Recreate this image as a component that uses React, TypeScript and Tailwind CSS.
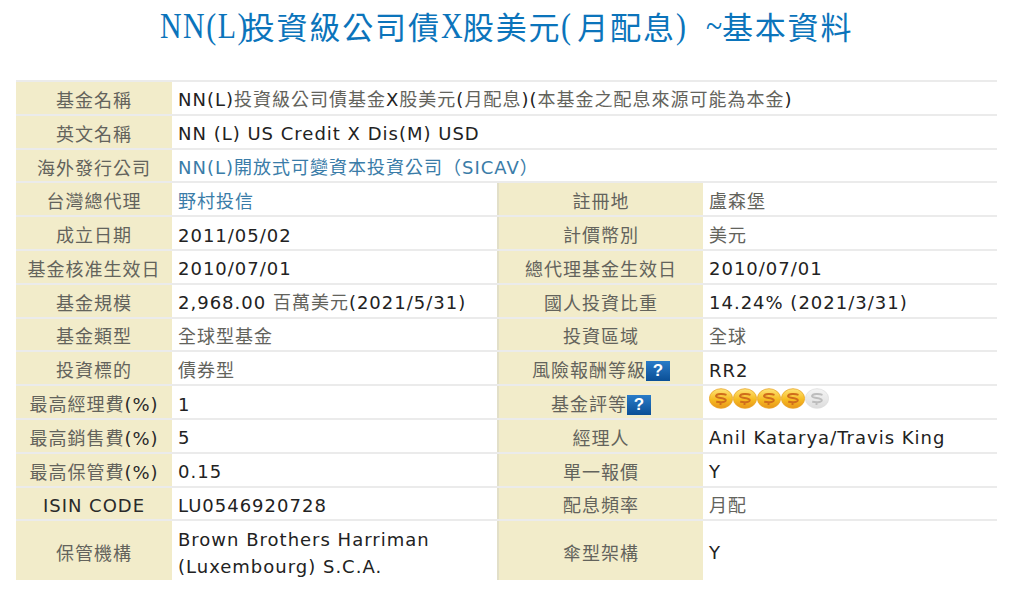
import React from "react";

const cjk = "[font-family:'DejaVu_Sans','Noto_Sans_CJK_TC',sans-serif]";

// Chinese runs read lighter than the latin text in the reference
const T = ({ text }: { text: string }) => (
  <span>
    {text.split(/([\u3400-\u9fff（）]+)/).map((part, i) =>
      i % 2 ? (
        <span key={i} className="text-[#63635c]">
          {part}
        </span>
      ) : (
        part
      ),
    )}
  </span>
);

const Narrow = ({ text, className }: { text: string; className: string }) => (
  <span className={`inline-block whitespace-pre ${className}`}>
    <span className="inline-block origin-left scale-x-[0.83] font-['Liberation_Serif',serif] text-[36px]">{text}</span>
  </span>
);

const Coin = ({ on }: { on: boolean }) => {
  const id = on ? "coinGold" : "coinGrey";
  return (
    <svg width="24" height="21" viewBox="0 0 24 21" className="shrink-0">
      <defs>
        <linearGradient id={id} x1="0" y1="0" x2="0" y2="1">
          <stop offset="0" stopColor={on ? "#ffe477" : "#f4f4f4"} />
          <stop offset="0.55" stopColor={on ? "#f6bc22" : "#e8e8e8"} />
          <stop offset="1" stopColor={on ? "#e8951a" : "#dcdcdc"} />
        </linearGradient>
      </defs>
      <ellipse cx="12" cy="10.5" rx="11.6" ry="9.8" fill={`url(#${id})`} stroke={on ? "#e8a528" : "#dedede"} strokeWidth="0.8" />
      <path
        d="M17.5 6.8C14 5.6 7.5 5.6 7 8c-.2 2.4 9.5 1.6 9.8 4.2.2 1.8-3.8 2.6-9.6 1.6M11.5 14v3"
        fill="none"
        stroke={on ? "#cf6d1c" : "#bdbdbd"}
        strokeWidth="1.9"
      />
    </svg>
  );
};

const Help = () => (
  <span className="inline-flex h-5 w-6 shrink-0 items-center justify-center bg-gradient-to-b from-[#2a7cc8] to-[#0a4f96] font-['Liberation_Sans',sans-serif] text-[17px] leading-none font-bold tracking-normal text-white">
    ?
  </span>
);

const Label = ({ children, className = "" }: { children: React.ReactNode; className?: string }) => (
  <div className={`flex items-center justify-center bg-[#f2ecca] pt-[5px] whitespace-nowrap text-[#2a2a2a] ${className}`}>{children}</div>
);

const Value = ({ children, className = "", link }: { children: React.ReactNode; className?: string; link?: boolean }) => (
  <div className={`flex items-center bg-white pt-[4px] pl-[5px] whitespace-nowrap ${link ? "text-[#3a7ca8]" : "text-[#222]"} ${className}`}>{children}</div>
);

const WideRow = ({ label, children, link }: { label: string; children: React.ReactNode; link?: boolean }) => (
  <div className="flex h-[33.8px] border-b-2 border-[#ebebeb]">
    <Label className="w-[156px]">
      <T text={label} />
    </Label>
    <Value className="ml-px flex-1" link={link}>
      {children}
    </Value>
  </div>
);

const Row = ({
  l1,
  v1,
  l2,
  v2,
  link,
  last,
}: {
  l1: string;
  v1: React.ReactNode;
  l2: React.ReactNode;
  v2: React.ReactNode;
  link?: boolean;
  last?: boolean;
}) => (
  <div className={last ? "flex h-[59px]" : "flex h-[33.8px] border-b-2 border-[#ebebeb]"}>
    <Label className="w-[156px]">
      <T text={l1} />
    </Label>
    <Value className="ml-px w-[324px]" link={link}>
      {typeof v1 === "string" && !link ? <T text={v1} /> : v1}
    </Value>
    <Label className="w-[206px] border-l-2 border-[#e2dfc8]">{typeof l2 === "string" ? <T text={l2} /> : l2}</Label>
    <Value className="ml-px flex-1">{typeof v2 === "string" ? <T text={v2} /> : v2}</Value>
  </div>
);

export default function App() {
  return (
    <div className={`h-[597px] w-[1023px] overflow-hidden bg-white pr-[26px] pl-4 text-[18px] tracking-[1px] ${cjk}`}>
      <h1 className="flex h-[51px] items-center justify-center font-['Noto_Sans_CJK_TC',sans-serif] text-[31px] leading-none tracking-[1.85px] whitespace-nowrap text-[#0b74bb]">
        <Narrow text="NN(L)" className="w-[84px]" />
        投資級公司債
        <Narrow text="X" className="w-[22px]" />
        股美元
        <Narrow text="(" className="w-[16px]" />
        月配息
        <Narrow text=")" className="w-[30px]" />
        <Narrow text="~" className="w-[16px]" />
        基本資料
      </h1>
      <div className="mt-[29px] border-t-2 border-[#ebebeb]">
        <WideRow label="基金名稱">
          <T text="NN(L)投資級公司債基金X股美元(月配息)(本基金之配息來源可能為本金)" />
        </WideRow>
        <WideRow label="英文名稱">NN (L) US Credit X Dis(M) USD</WideRow>
        <WideRow label="海外發行公司" link>
          NN(L)開放式可變資本投資公司（SICAV）
        </WideRow>
        <Row l1="台灣總代理" v1="野村投信" link l2="註冊地" v2="盧森堡" />
        <Row l1="成立日期" v1="2011/05/02" l2="計價幣別" v2="美元" />
        <Row l1="基金核准生效日" v1="2010/07/01" l2="總代理基金生效日" v2="2010/07/01" />
        <Row l1="基金規模" v1="2,968.00 百萬美元(2021/5/31)" l2="國人投資比重" v2="14.24% (2021/3/31)" />
        <Row l1="基金類型" v1="全球型基金" l2="投資區域" v2="全球" />
        <Row
          l1="投資標的"
          v1="債券型"
          l2={
            <>
              <T text="風險報酬等級" />
              <Help />
            </>
          }
          v2="RR2"
        />
        <Row
          l1="最高經理費(%)"
          v1="1"
          l2={
            <>
              <T text="基金評等" />
              <Help />
            </>
          }
          v2={
            <div className="-mt-[12px] flex">
              <Coin on />
              <Coin on />
              <Coin on />
              <Coin on />
              <Coin on={false} />
            </div>
          }
        />
        <Row l1="最高銷售費(%)" v1="5" l2="經理人" v2="Anil Katarya/Travis King" />
        <Row l1="最高保管費(%)" v1="0.15" l2="單一報價" v2="Y" />
        <Row l1="ISIN CODE" v1="LU0546920728" l2="配息頻率" v2="月配" />
        <Row
          l1="保管機構"
          v1={
            <div className="leading-[27px]">
              Brown Brothers Harriman
              <br />
              (Luxembourg) S.C.A.
            </div>
          }
          l2="傘型架構"
          v2="Y"
          last
        />
      </div>
    </div>
  );
}
